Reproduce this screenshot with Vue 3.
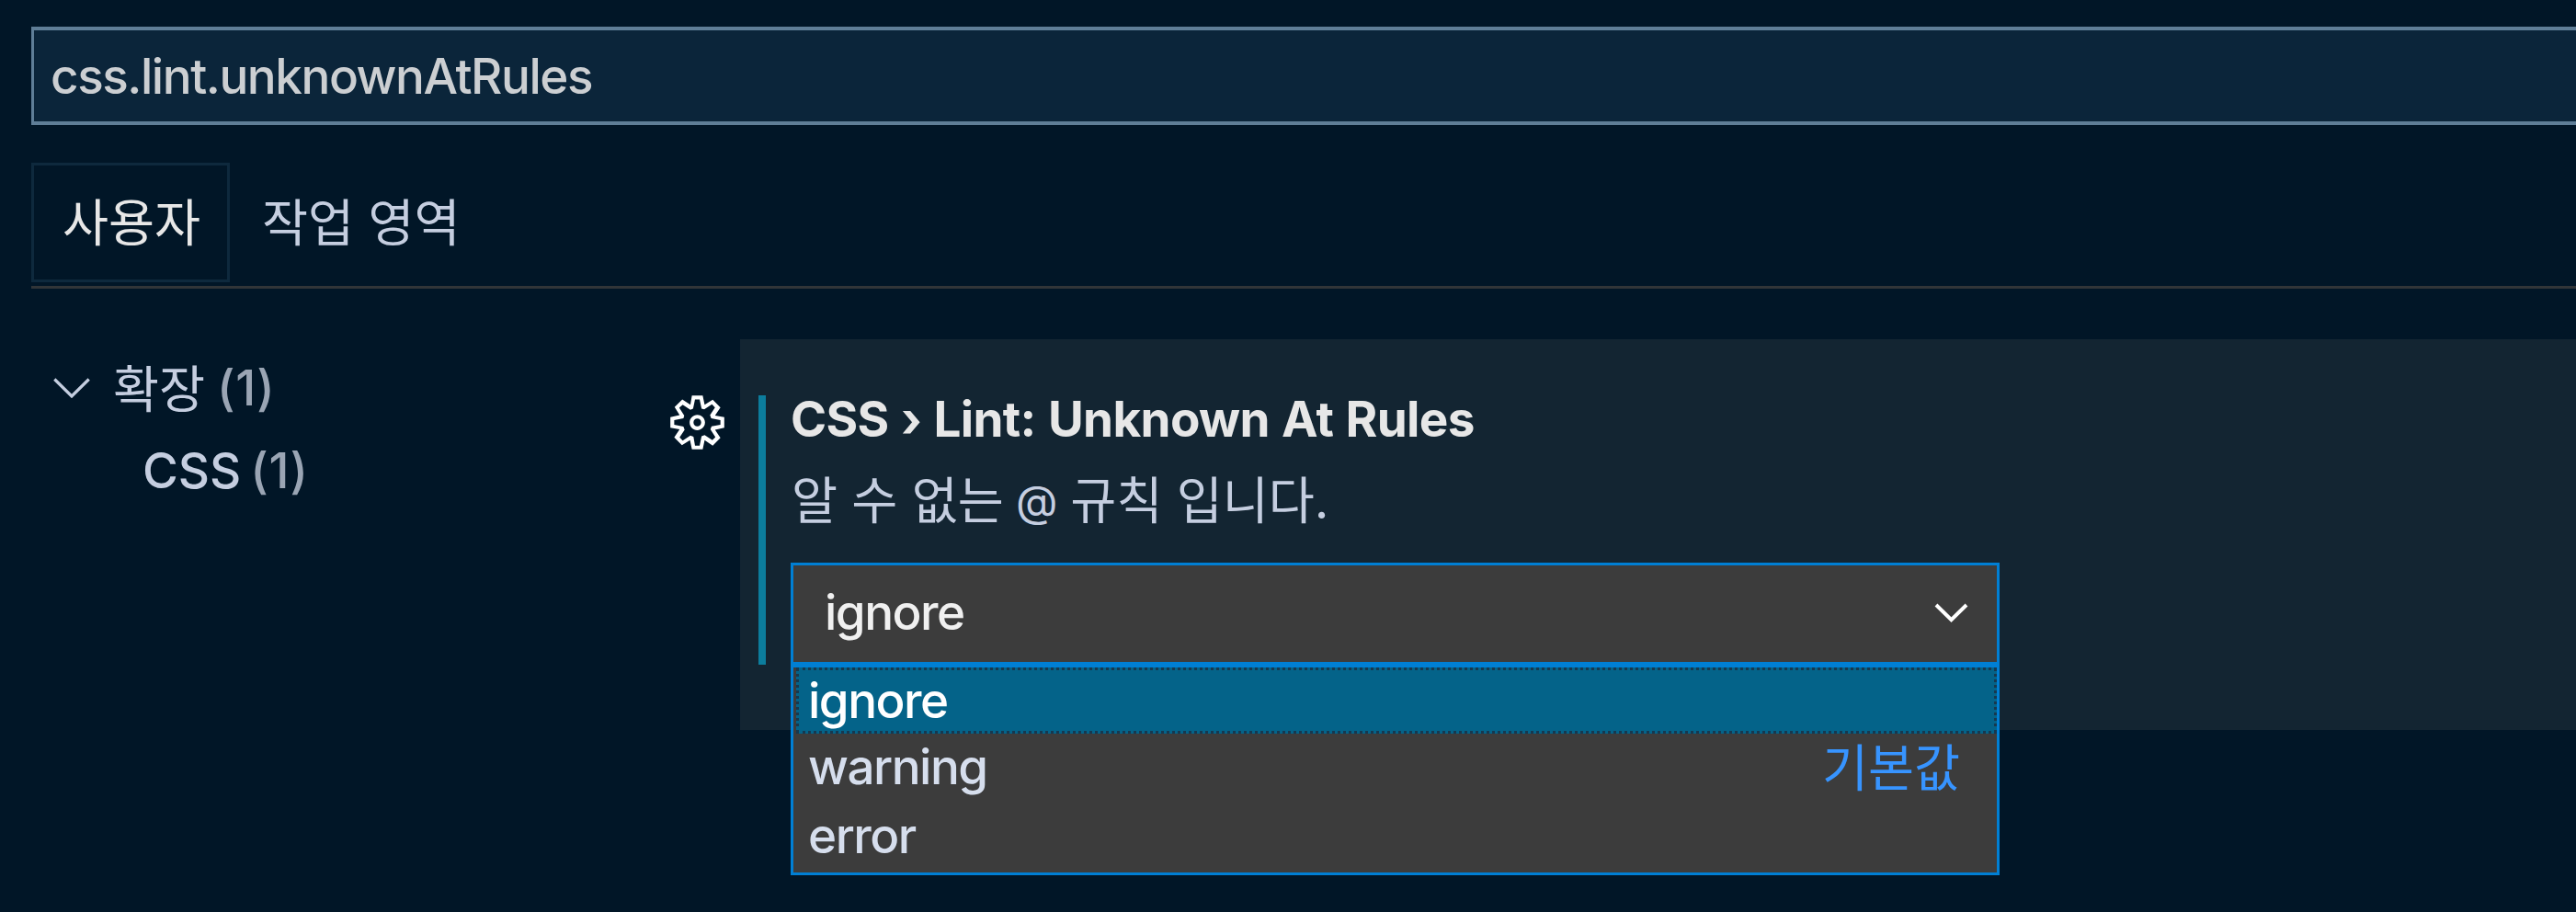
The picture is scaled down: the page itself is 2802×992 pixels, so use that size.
<script setup>
const options = [
  { name: 'ignore', selected: true },
  { name: 'warning', badge: '기본값' },
  { name: 'error' },
]
</script>

<template>
  <div class="settings">
    <div class="search"><span>css.lint.unknownAtRules</span></div>
    <nav class="tabs">
      <div class="tab active"><span class="ko">사용자</span></div>
      <div class="tab"><span class="ko">작업 영역</span></div>
    </nav>
    <main class="body">
      <aside class="tree">
        <div class="row">
          <svg class="twisty" viewBox="0 0 40 22"><path d="M1.3 1.5 20 20 38.7 1.5" /></svg>
          <span class="ko">확장</span><span class="count">(1)</span>
        </div>
        <div class="row child"><span>CSS</span><span class="count">(1)</span></div>
      </aside>
      <div class="gear">
        <svg viewBox="0 0 16 16"><path fill-rule="evenodd" d="M9.1 4.4L8.6 2H7.4l-.5 2.4-.7.3-2-1.3-.9.8 1.3 2-.2.7-2.4.5v1.2l2.4.5.3.8-1.3 2 .8.8 2-1.3.8.3.4 2.3h1.2l.5-2.4.8-.3 2 1.3.8-.8-1.3-2 .3-.8 2.3-.4V7.4l-2.4-.5-.3-.8 1.3-2-.8-.8-2 1.3-.7-.2zM9.4 1l.5 2.4L12 2.1l2 2-1.4 2.1 2.4.4v2.8l-2.4.5L14 12l-2 2-2.1-1.4-.5 2.4H6.6l-.5-2.4L4 13.9l-2-2 1.4-2.1L1 9.4V6.6l2.4-.5L2.1 4l2-2 2.1 1.4.4-2.4h2.8zm.6 7c0 1.1-.9 2-2 2s-2-.9-2-2 .9-2 2-2 2 .9 2 2zM8 9c.6 0 1-.4 1-1s-.4-1-1-1-1 .4-1 1 .4 1 1 1z" /></svg>
      </div>
      <section class="setting">
        <div class="content">
          <h1 class="title">CSS › Lint: Unknown At Rules</h1>
          <p class="desc ko">알 수 없는 <span class="at">@</span> 규칙 입니다.</p>
          <div class="select">
            <span>ignore</span>
            <svg class="arrow" viewBox="0 0 37 21"><path d="M2 2 18.5 18.2 35 2" /></svg>
            <ul class="list">
              <li v-for="o in options" :key="o.name" class="option" :class="{ selected: o.selected }">
                <span>{{ o.name }}</span>
                <span v-if="o.badge" class="badge ko">{{ o.badge }}</span>
              </li>
            </ul>
          </div>
        </div>
      </section>
    </main>
  </div>
</template>

<style>
body {
  margin: 0;
  background: #011627;
}
</style>

<style scoped>
.settings {
  box-sizing: border-box;
  width: 100%;
  height: 992px;
  overflow: hidden;
  display: flex;
  flex-direction: column;
  padding: 29px 0 0 34px;
  background: #011627;
  color: #c5cee0;
  font: 450 53px/64px Inter, "Noto Sans CJK KR", sans-serif;
  white-space: nowrap;
}
.ko {
  padding-top: 2px;
  font-size: 54.4px;
  font-weight: 400;
}
.search {
  box-sizing: border-box;
  height: 107px;
  display: flex;
  align-items: center;
  padding-left: 18px;
  border: 4px solid #5f7e97;
  border-left-width: 3px;
  border-right: 0;
  background: #0b253a;
  color: #cccfd2;
  letter-spacing: -1.45px;
}
.tabs {
  display: flex;
  margin-top: 41px;
  padding-bottom: 4px;
  border-bottom: 3px solid #313538;
}
.tab {
  box-sizing: border-box;
  height: 130px;
  display: flex;
  align-items: center;
  padding: 0 32px;
  border: 3px solid transparent;
}
.tab .ko {
  padding: 0 0 1px;
}
.tab.active {
  width: 216px;
  padding-left: 31px;
  border-color: #0e293d;
  color: #e7e7e7;
}
.body {
  display: flex;
  align-items: flex-start;
}
.tree {
  width: 691px;
  padding-top: 63px;
}
.row {
  display: flex;
  align-items: center;
  height: 90px;
  padding-left: 24px;
}
.row.child {
  padding-left: 121px;
}
.twisty {
  width: 40px;
  height: 22px;
  margin-right: 25px;
  fill: none;
  stroke: #c5cee0;
  stroke-width: 3.2;
}
.count {
  margin-left: 13px;
  color: #9aa5b4;
  letter-spacing: 0.6px;
}
.child .count {
  margin-left: 10px;
}
.gear {
  width: 80px;
  padding-top: 112px;
}
.gear svg {
  display: block;
  width: 67px;
  height: 67px;
  fill: #fff;
}
.setting {
  flex: 1;
  box-sizing: border-box;
  height: 425px;
  margin-top: 55px;
  padding: 61px 0 0 20px;
  background: #132532;
}
.content {
  border-left: 8px solid #0c7d9d;
  padding-left: 27px;
}
.title {
  margin: 0 0 29px;
  font-size: 53px;
  font-weight: 700;
  line-height: 53px;
  color: #e7e7e7;
  letter-spacing: -0.65px;
  word-spacing: 1.4px;
}
.desc {
  height: 64px;
  margin: 0 0 36px;
  padding: 0 0 0 1px;
}
.at {
  display: inline-block;
  width: 44px;
  margin-left: -2px;
  font-size: 47px;
  line-height: 50px;
  vertical-align: 2px;
}
.select {
  position: relative;
  box-sizing: border-box;
  width: 1315px;
  height: 111px;
  display: flex;
  align-items: center;
  justify-content: space-between;
  padding: 0 31px 3px 34px;
  border: 3px solid #007fd4;
  background: #3c3c3c;
  color: #f0f0f0;
  letter-spacing: -1.5px;
}
.arrow {
  width: 37px;
  height: 21px;
  fill: none;
  stroke: #fff;
  stroke-width: 4;
}
.list {
  position: absolute;
  top: 108px;
  left: -3px;
  right: -3px;
  box-sizing: border-box;
  height: 229px;
  margin: 0;
  padding: 0 0 0 3px;
  border: 3px solid #007fd4;
  background: #3c3c3c;
  color: #d6deed;
  list-style: none;
}
.option {
  box-sizing: border-box;
  height: 72px;
  display: flex;
  align-items: center;
  justify-content: space-between;
  padding: 0 37px 0 10px;
  border: 3px solid transparent;
}
.option:last-child {
  height: 78px;
}
.option.selected {
  border: 3px dotted #16384f;
  background: #046389;
  color: #fff;
}
.badge {
  color: #3794ff;
  letter-spacing: 0;
}
</style>
